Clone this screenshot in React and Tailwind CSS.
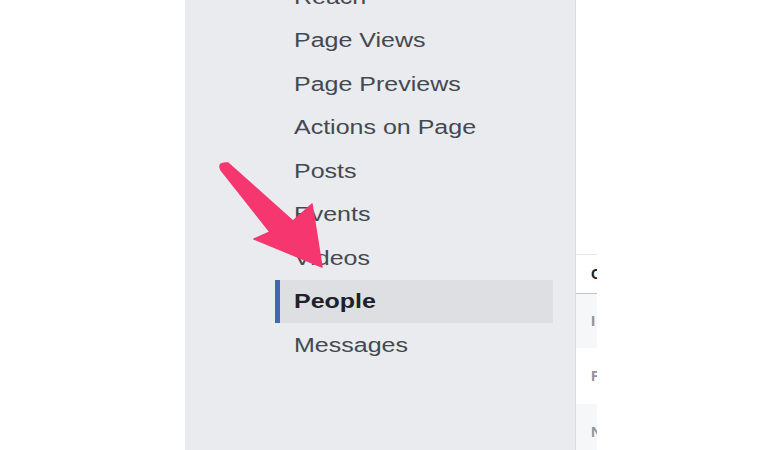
import React from 'react';

const items = [
  'Reach',
  'Page Views',
  'Page Previews',
  'Actions on Page',
  'Posts',
  'Events',
  'Videos',
  'People',
  'Messages',
];

const rows = [
  { letter: 'I', bg: 'bg-[#f6f7f9]', h: 'h-[54px]' },
  { letter: 'F', bg: 'bg-white', h: 'h-[56px]' },
  { letter: 'N', bg: 'bg-[#f6f7f9]', h: 'h-[56px]' },
];

function Arrow() {
  return (
    <svg className="absolute left-0 top-0 pointer-events-none" width="780" height="450" viewBox="0 0 780 450">
      <path
        d="M228 163 L293 221 L312 204 L322 267 L254 239 L270 232 L221 170 Q217 162 228 163 Z"
        fill="#f5366f"
        stroke="#f5366f"
        strokeWidth="1.5"
        strokeLinejoin="round"
      />
    </svg>
  );
}

export default function App() {
  return (
    <div
      className="relative w-[780px] h-[450px] overflow-hidden bg-white flex"
      style={{ fontFamily: '"Liberation Sans", Arial, sans-serif' }}
    >
      <div className="w-[185px] shrink-0 bg-white" />

      <div className="w-[391px] shrink-0 bg-[#e9ebee] border-r border-[#dadde1] pl-[90px]">
        <ul className="mt-[-25px] w-[278px]">
          {items.map((label) => {
            const active = label === 'People';
            return (
              <li
                key={label}
                className={`h-[43.5px] flex items-center pl-[14px] border-l-[5px] ${
                  active ? 'border-[#4267b2] bg-[#dddfe2]' : 'border-transparent'
                }`}
              >
                <span
                  className={`inline-block origin-left scale-x-125 text-[20px] leading-none whitespace-nowrap ${
                    active ? 'font-bold text-[#1d2129]' : 'text-[#444950]'
                  }`}
                >
                  {label}
                </span>
              </li>
            );
          })}
        </ul>
      </div>

      <div className="w-[21px] shrink-0 overflow-hidden">
        <div className="mt-[254px] w-[200px] border-t border-[#e5e6e9]">
          <div className="h-[39px] flex items-center pl-[15px] border-b border-[#bec3c9]">
            <span className="text-[15px] font-bold text-[#1d2129]">Country</span>
          </div>
          {rows.map((r) => (
            <div key={r.letter} className={`${r.h} ${r.bg} flex items-center pl-[15px]`}>
              <span className="text-[15px] font-bold text-[#90949c]">{r.letter}</span>
            </div>
          ))}
        </div>
      </div>

      <div className="flex-1 bg-white" />

      <Arrow />
    </div>
  );
}
